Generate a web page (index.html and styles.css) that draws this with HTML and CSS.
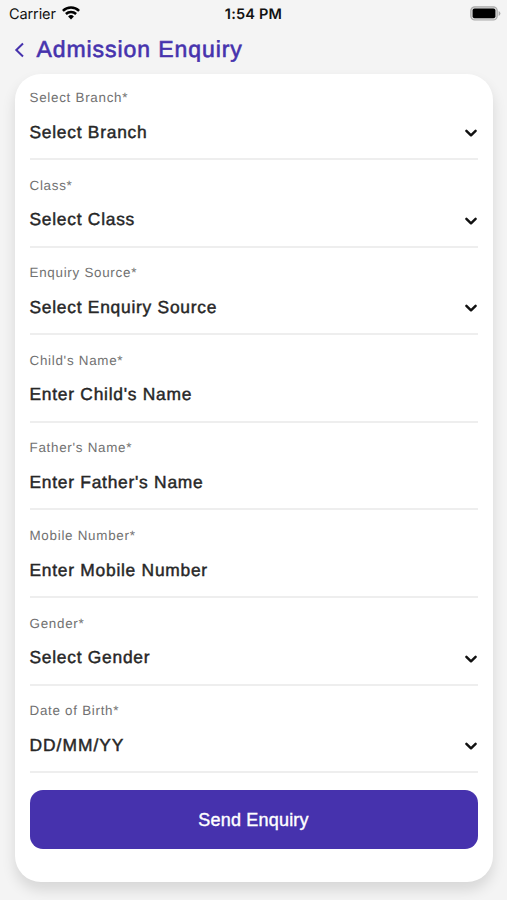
FILE: index.html
```html
<!DOCTYPE html>
<html lang="en">
<head>
<meta charset="utf-8">
<title>Admission Enquiry</title>
<link rel="stylesheet" href="styles.css">
</head>
<body>
<div class="status">
  <div class="carrier"><span>Carrier</span>
    <svg class="wifi" width="18" height="14" viewBox="0 0 18 14" fill="none" stroke="#000" stroke-width="2.5"><path d="M.9 4.8a11.6 11.6 0 0 1 16.2 0"/><path d="M3.9 8a7.3 7.3 0 0 1 10.2 0"/><path d="M9 13.5 6.1 10.5a4.2 4.2 0 0 1 5.8 0Z" fill="#000" stroke="none"/></svg>
  </div>
  <span class="time">1:54 PM</span>
  <svg class="battery" width="31" height="15" viewBox="0 0 31 15"><rect x=".8" y=".8" width="26.4" height="13.2" rx="4" fill="#d8d8d8" stroke="#aaa" stroke-width="1.2"/><rect x="2.6" y="2.6" width="22.8" height="9.6" rx="2" fill="#000"/><path d="M28.6 5v5q1.8-.8 1.8-2.5T28.6 5Z" fill="#aaa"/></svg>
</div>
<header class="title">
  <svg width="10" height="16" viewBox="0 0 10 16" fill="none" stroke="#4632ad" stroke-width="2"><path d="M9 1.5 2.3 8 9 14.5"/></svg>
  <h1>Admission Enquiry</h1>
</header>
<main class="card">
  <div class="fields">
    <div class="field"><label>Select Branch*</label><div class="value"><span>Select Branch</span><svg class="chev" viewBox="0 0 14 10"><path d="m2.4 2.8 4.6 4.5 4.6-4.5"/></svg></div></div>
    <div class="field"><label>Class*</label><div class="value"><span>Select Class</span><svg class="chev" viewBox="0 0 14 10"><path d="m2.4 2.8 4.6 4.5 4.6-4.5"/></svg></div></div>
    <div class="field"><label>Enquiry Source*</label><div class="value"><span>Select Enquiry Source</span><svg class="chev" viewBox="0 0 14 10"><path d="m2.4 2.8 4.6 4.5 4.6-4.5"/></svg></div></div>
    <div class="field"><label>Child's Name*</label><div class="value"><span>Enter Child's Name</span></div></div>
    <div class="field"><label>Father's Name*</label><div class="value"><span>Enter Father's Name</span></div></div>
    <div class="field"><label>Mobile Number*</label><div class="value"><span>Enter Mobile Number</span></div></div>
    <div class="field"><label>Gender*</label><div class="value"><span>Select Gender</span><svg class="chev" viewBox="0 0 14 10"><path d="m2.4 2.8 4.6 4.5 4.6-4.5"/></svg></div></div>
    <div class="field"><label>Date of Birth*</label><div class="value"><span class="date">DD/MM/YY</span><svg class="chev" viewBox="0 0 14 10"><path d="m2.4 2.8 4.6 4.5 4.6-4.5"/></svg></div></div>
  </div>
  <button class="send">Send Enquiry</button>
</main>
</body>
</html>
```

FILE: styles.css
```css
* { box-sizing: border-box; }
body {
  margin: 0;
  height: 900px;
  overflow: hidden;
  background: #f4f4f4;
  font-family: "Liberation Sans", Arial, sans-serif;
  text-rendering: geometricPrecision;
}
.status {
  display: grid;
  grid-template-columns: 1fr auto 1fr;
  align-items: center;
  height: 28px;
  padding: 0 6px 0 9px;
  font-family: Inter, sans-serif;
  font-size: 14.5px;
  color: #111;
}
.carrier { display: flex; align-items: center; gap: 6px; }
.carrier span { letter-spacing: -.1px; }
.wifi { margin-top: -2px; }
.time { font-weight: 600; letter-spacing: .2px; margin-right: 3px; }
.battery { justify-self: end; margin-top: -1px; }
.title {
  display: flex;
  align-items: center;
  gap: 12.5px;
  height: 46px;
  padding: 0 0 4px 14px;
  color: #4632ad;
}
.title svg { margin-top: 2px; }
.title h1 {
  margin: 0;
  font-size: 23px;
  font-weight: 400;
  letter-spacing: .93px;
  -webkit-text-stroke: .6px currentColor;
}
.card {
  margin: 0 14px 0 14.5px;
  height: 808px;
  padding: 16px 15.5px 0 15px;
  background: #fff;
  border-radius: 26px;
  box-shadow: 0 8px 14px rgba(0, 0, 0, .12);
}
.fields { display: flex; flex-direction: column; gap: 17.6px; }
.field { height: 70px; border-bottom: 2px solid #eee; }
label {
  display: block;
  height: 16px;
  line-height: 16px;
  font-size: 13.4px;
  letter-spacing: .72px;
  color: #717171;
}
.value {
  display: flex;
  align-items: center;
  justify-content: space-between;
  height: 24px;
  margin-top: 14px;
  font-size: 17.4px;
  letter-spacing: .74px;
  color: #272727;
  -webkit-text-stroke: .45px currentColor;
}
.value span { margin-top: .4px; }
.value .date { letter-spacing: 1px; }
.chev {
  width: 14px;
  height: 10px;
  margin-top: 2px;
  fill: none;
  stroke: #111;
  stroke-width: 2.5;
  stroke-linecap: round;
  stroke-linejoin: round;
}
.send {
  display: block;
  width: 100%;
  height: 58.5px;
  margin-top: 17.2px;
  padding-top: 3px;
  border: 0;
  border-radius: 13px;
  background: #4632ad;
  color: #fff;
  font: 18px "Liberation Sans", Arial, sans-serif;
  letter-spacing: .2px;
  -webkit-text-stroke: .4px currentColor;
}
```
